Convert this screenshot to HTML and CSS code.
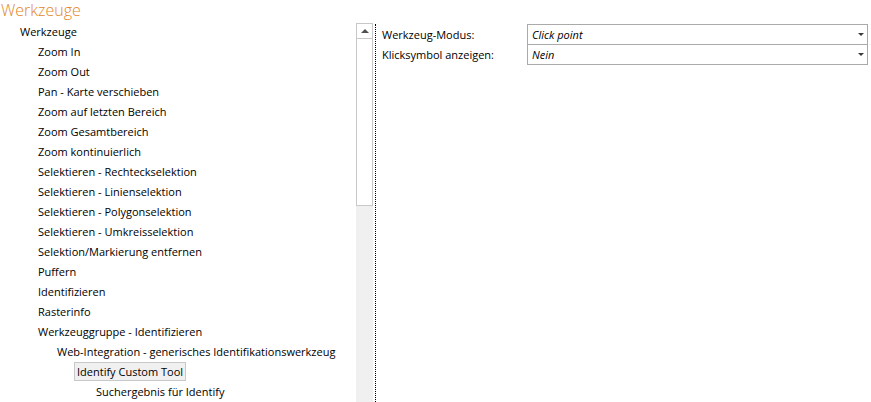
FILE: index.html
```html
<!DOCTYPE html>
<html>
<head>
    <title>Werkzeuge</title>
    <link rel="stylesheet" href="styles.css">
</head>
<body>
    <h1 class="title">Werkzeuge</h1>
    <div class="main">
        <div class="tree">
            <div class="node lvl0">Werkzeuge</div>
            <div class="node lvl1">Zoom In</div>
            <div class="node lvl1">Zoom Out</div>
            <div class="node lvl1">Pan - Karte verschieben</div>
            <div class="node lvl1">Zoom auf letzten Bereich</div>
            <div class="node lvl1">Zoom Gesamtbereich</div>
            <div class="node lvl1">Zoom kontinuierlich</div>
            <div class="node lvl1">Selektieren - Rechteckselektion</div>
            <div class="node lvl1">Selektieren - Linienselektion</div>
            <div class="node lvl1">Selektieren - Polygonselektion</div>
            <div class="node lvl1">Selektieren - Umkreisselektion</div>
            <div class="node lvl1">Selektion/Markierung entfernen</div>
            <div class="node lvl1">Puffern</div>
            <div class="node lvl1">Identifizieren</div>
            <div class="node lvl1">Rasterinfo</div>
            <div class="node lvl1">Werkzeuggruppe - Identifizieren</div>
            <div class="node lvl2">Web-Integration - generisches Identifikationswerkzeug</div>
            <div class="node lvl3"><span class="selected">Identify Custom Tool</span></div>
            <div class="node lvl4">Suchergebnis für Identify</div>
        </div>
        <div class="scrollbar">
            <div class="scroll-btn"><span class="arrow-up"></span></div>
            <div class="scroll-thumb"></div>
            <div class="scroll-track"></div>
        </div>
        <div class="props">
            <div class="prop-row">
                <div class="prop-label">Werkzeug-Modus:</div>
                <div class="prop-value">Click point<span class="arrow-down"></span></div>
            </div>
            <div class="prop-row">
                <div class="prop-label">Klicksymbol anzeigen:</div>
                <div class="prop-value">Nein<span class="arrow-down"></span></div>
            </div>
        </div>
    </div>
</body>
</html>
```
FILE: styles.css
```css
body{
    margin: 0;
    background-color: white;
    color: black;
    font-family: "Open Sans", sans-serif;
    font-size: 11px;
    overflow: hidden;
}

.title{
    margin: 0;
    padding-left: 1px;
    height: 22px;
    line-height: 20px;
    font-size: 16px;
    font-weight: 300;
    color: rgb(226, 134, 38);
}

.main{
    display: flex;
    height: 380px;
}

.tree{
    width: 356px;
    flex: none;
}

.node{
    height: 20px;
    line-height: 20px;
    white-space: nowrap;
}

.lvl0{ padding-left: 20px; }
.lvl1{ padding-left: 38px; }
.lvl2{ padding-left: 57px; }
.lvl3{ padding-left: 74px; }
.lvl4{ padding-left: 96px; }

.selected{
    display: inline-block;
    height: 17px;
    line-height: 17px;
    padding: 0 2px;
    background-color: rgb(240, 240, 240);
    border: 1px solid rgb(200, 200, 200);
}

.scrollbar{
    width: 17px;
    flex: none;
    margin-top: 1px;
    display: flex;
    flex-direction: column;
    background-color: rgb(240, 240, 240);
}

.scroll-btn{
    height: 14px;
    background-color: white;
    border: 1px solid rgb(200, 200, 200);
    display: flex;
    justify-content: center;
    align-items: center;
}

.arrow-up{
    width: 0;
    height: 0;
    border-left: 4px solid transparent;
    border-right: 4px solid transparent;
    border-bottom: 4px solid rgb(80, 80, 80);
}

.scroll-thumb{
    height: 166px;
    background-color: white;
    border: 1px solid rgb(200, 200, 200);
    border-top: none;
}

.scroll-track{
    flex: 1;
}

.props{
    flex: 1;
    margin-left: 2px;
    margin-top: 2px;
    padding-left: 6px;
    border-left: 1px dotted black;
}

.prop-row{
    display: flex;
    height: 20px;
}

.prop-label{
    width: 145px;
    line-height: 22px;
}

.prop-value{
    box-sizing: border-box;
    width: 341px;
    height: 20px;
    display: flex;
    align-items: center;
    justify-content: space-between;
    padding-left: 4px;
    padding-right: 3px;
    font-style: italic;
    border: 1px solid rgb(170, 170, 170);
    border-bottom: none;
}

.prop-row:last-child .prop-value{
    height: 21px;
    border-bottom: 1px solid rgb(170, 170, 170);
}

.arrow-down{
    width: 0;
    height: 0;
    border-left: 3px solid transparent;
    border-right: 3px solid transparent;
    border-top: 3px solid rgb(60, 60, 60);
}
```
